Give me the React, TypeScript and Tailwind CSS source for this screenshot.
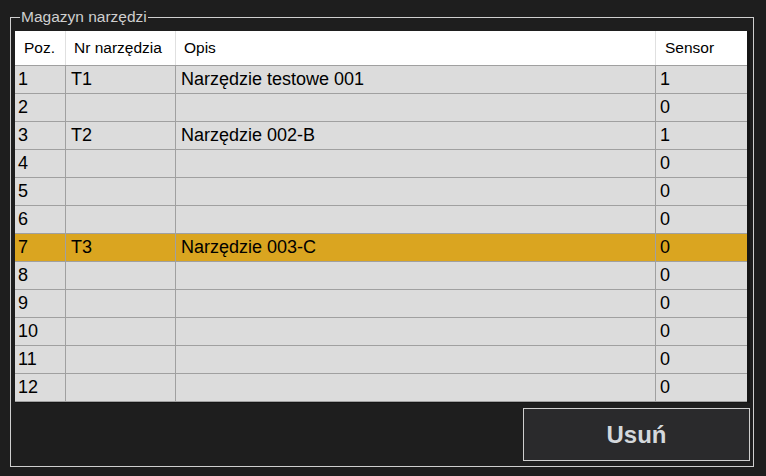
import React from "react";

const rows: [string, string, string, string][] = [
  ["1", "T1", "Narzędzie testowe 001", "1"],
  ["2", "", "", "0"],
  ["3", "T2", "Narzędzie 002-B", "1"],
  ["4", "", "", "0"],
  ["5", "", "", "0"],
  ["6", "", "", "0"],
  ["7", "T3", "Narzędzie 003-C", "0"],
  ["8", "", "", "0"],
  ["9", "", "", "0"],
  ["10", "", "", "0"],
  ["11", "", "", "0"],
  ["12", "", "", "0"],
];

export default function App() {
  return (
    <div
      className="w-[766px] h-[476px] bg-[#1e1e1e] pt-[8px] pl-[10px]"
      style={{ fontFamily: '"Liberation Sans", Arial, sans-serif' }}
    >
      <fieldset className="w-[744px] h-[459px] border border-[#cfcfcf] pl-[4px] pr-[2px] pb-[4px] m-0 flex flex-col">
        <legend className="ml-[5px] px-[1px] text-[15.5px] leading-[18px] text-[#cfcfcf]">
          Magazyn narzędzi
        </legend>
        <div className="mt-[5px] w-[735px] border-r-[3px] border-b-[1px] border-[#151515]">
          <div className="grid grid-cols-[51px_110px_480px_94px] bg-white h-[35px] border-b border-[#a0a0a0] text-[15.5px] text-[#000]">
            <div className="pl-[9px] flex items-center border-r border-[#e0e0e0]">Poz.</div>
            <div className="pl-[8px] flex items-center border-r border-[#e0e0e0]">Nr narzędzia</div>
            <div className="pl-[8px] flex items-center border-r border-[#e0e0e0]">Opis</div>
            <div className="pl-[9px] flex items-center">Sensor</div>
          </div>
          {rows.map((r, i) => (
            <div
              key={i}
              className={`grid grid-cols-[51px_110px_480px_94px] h-[28px] border-b border-[#a0a0a0] text-[18px] text-black ${
                r[0] === "7" ? "bg-[#daa520]" : "bg-[#dcdcdc]"
              }`}
            >
              <div className="pl-[3px] flex items-center border-r border-[#a0a0a0]">{r[0]}</div>
              <div className="pl-[5px] flex items-center border-r border-[#a0a0a0]">{r[1]}</div>
              <div className="pl-[5px] flex items-center border-r border-[#a0a0a0]">{r[2]}</div>
              <div className="pl-[4px] flex items-center">{r[3]}</div>
            </div>
          ))}
        </div>
        <div className="flex justify-end mt-[5px] pr-[1px]">
          <button className="w-[227px] h-[53px] bg-[#2a2a2c] border border-[#cfcfcf] text-[#d4d8dc] text-[24px] font-bold">
            Usuń
          </button>
        </div>
      </fieldset>
    </div>
  );
}
